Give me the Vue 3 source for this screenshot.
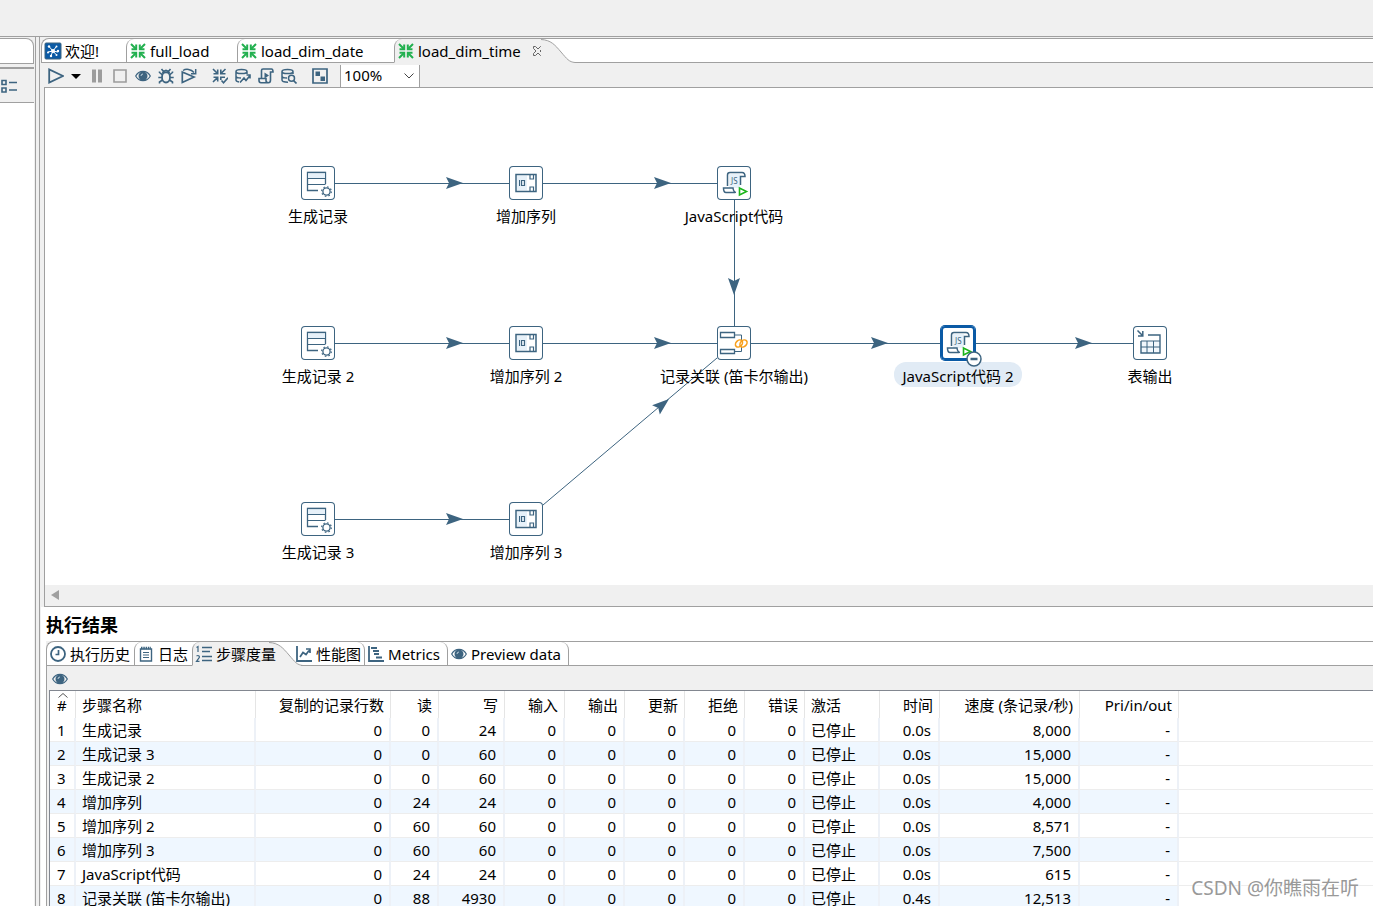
<script setup>
import { ref } from 'vue'

const zoom = ref('100%')

const icons = {
  logo: '<rect width="16" height="16" rx="1" fill="#0a5aa5"/><path d="M8 8 4 3.500M8 8l3-4M8 8 3 9M8 8l5 1M8 8l-2 4.500M8 8l3 3.500" stroke="#fff" stroke-width="1"/><g fill="#fff" stroke="none"><circle cx="8" cy="8" r="2"/><circle cx="4" cy="3.500" r="1.200"/><circle cx="11.500" cy="3.500" r="1"/><circle cx="3" cy="9.500" r="1"/><circle cx="13" cy="8" r="1.200"/><circle cx="6" cy="13" r="1.200"/><circle cx="11.500" cy="12" r="1"/></g>',
  trans: '<g stroke="#22b04f" stroke-width="2" fill="none"><path d="M1 1l5 5M15 1l-5 5M1 15l5-5M15 15l-5-5"/><path d="M1.500 6.200h4.700V1.500M14.500 6.200H9.800V1.500M1.500 9.800h4.700v4.700M14.500 9.800H9.800v4.700"/></g>',
  play: '<path d="M1.200 1.500v13L15 8z" stroke-width="1.800"/>',
  pause: '<path d="M3 1.500h4v13H3zM9 1.500h4v13H9z" fill="#9c9c9c" stroke="none"/>',
  stop: '<path d="M2 2h12v12H2z" stroke="#9c9c9c" stroke-width="1.600"/>',
  eye: '<path d="M.700 8C4 1.800 12 1.800 15.300 8 12 14.200 4 14.200.700 8z" stroke-width="1.200"/><circle cx="8" cy="8" r="4.500" fill="#3d6480" stroke="none"/><path d="M6 8a2 2 0 0 1 2-2" stroke="#bdd0dc" stroke-width="1"/>',
  bug: '<ellipse cx="8" cy="9.300" rx="4" ry="5.200" stroke-width="1.800"/><path d="M5 4.500Q8 0 11 4.500zM3.500 1l2 2.500M12.500 1l-2 2.500M4.500 7 1.500 4.500v-1M11.500 7l3-2.500v-1M4 9.500H.300M12 9.500h3.700M4.500 12l-3 2v1.500M11.500 12l3 2v1.500" stroke-width="1.600"/>',
  replay: '<path d="M1.300 4v10.500L13 9z" stroke-width="1.700"/><path d="M2 2.500C5 .500 10 1 13 4.500M14.700 1v4.800H10" stroke-width="1.500"/>',
  verify: '<g stroke-width="1.600"><path d="M1 1l4.500 4.500M13.500 1 9 5.500M1 14l4.500-4.500M1.500 5.700h4.200V1.500M13.500 5.700H8.800V1.500M1.500 9.300h4.200v4.200M13 9.300H8.800V12"/><path d="m9.500 12.500 2 2.200 4.500-5"/></g>',
  dbarrow: '<path d="M1 3.500C1 .700 12 .700 12 3.500S1 6.300 1 3.500zV12c0 1 1 1.700 3 2M12 3.500V6M1 8c0 1.500 2.500 2 5 2" stroke-width="1.500"/><path d="m5 14.500 4-4.500 2 2.500 4-5M11.500 7H15v3.500" stroke-width="1.600"/>',
  script: '<path d="M3.500 10.500v-8Q3.500 1 5 1h8.500Q15 1 15 4h-2.500V12q0 2.700-2.200 2.700H3Q1 14.700 1 12.500v-2h7v2q0 2 2 2" stroke-width="1.600"/><path d="m6.500 4.500 4.500 3-4.500 3z" fill="#3d6480" stroke="none"/>',
  dbsearch: '<path d="M1 3.500C1 .700 12 .700 12 3.500S1 6.300 1 3.500zV12c0 1.500 3 2.200 6 2.200M12 3.500V6M1 8c0 1.500 2.500 2 5 2" stroke-width="1.500"/><circle cx="10.500" cy="10.200" r="3" stroke-width="1.500"/><path d="m12.500 12.500 3 3" stroke-width="1.700"/>',
  panes: '<path d="M1 1h14v14H1z" stroke-width="1.700"/><path d="M3.500 3.500h4.500v4.500H3.500zM8.500 8.500H13V13H8.500z" fill="#3d6480" stroke="none"/>',
  clock: '<circle cx="8" cy="8" r="7" stroke-width="1.800"/><path d="M8.500 4v4.500H5.500" stroke-width="1.700"/>',
  log: '<path d="M2.500 3h11v12h-11z" stroke-width="1.400"/><path d="M3 2h10" stroke-width="2.400" stroke-dasharray="1.500 .800"/><path d="M5 6.500h6M5 9h6M5 11.500h6" stroke-width="1.200"/>',
  steps: '<path d="M6 1.500h10M6 5.500h8M6 10.500h10M6 14.500h10" stroke-width="1.300"/><path d="m.500 1.500 1.500-1V6M.500 10q1.500-1 2.500 0t0 2L.500 15.400H3.500" stroke-width="1.200"/>',
  chart: '<path d="M1 0v15h15" stroke-width="1.800"/><path d="m4 11 3-4.500 3 2 3-4M10 3h4v4" stroke-width="1.700"/>',
  gantt: '<path d="M1 0v15h15" stroke-width="1.800"/><path d="M3 2h6M5 5h6M6 8h5M8 11.500h6" stroke-width="2"/>',
  outline: '<path d="M1 1.500h4v4H1zM1 9h4v4H1z" stroke-width="1.600"/><path d="M8 3.500h8M8 11h8" stroke-width="1.500"/>',
}

const nodeIcons = {
  rows: '<path d="M24.500 18V6.500h-18v18H17" stroke-width="1.300"/><path d="M7 7h17v5H7z" fill="#e7f1f9" stroke="none"/><path d="M6.500 12.500h18M6.500 18.500h18" stroke-width="1"/><path d="M6.500 6.500h18" stroke-width="1.200"/><circle cx="25.500" cy="25.500" r="3.600" stroke-width="1.300"/><circle cx="25.500" cy="25.500" r="4.800" stroke-width="1.200" stroke-dasharray="1.600 2.170"/>',
  seq: '<path d="M8 9.500h10v15H8z" fill="#e7f1f9" stroke="none"/><path d="M7 8.500h20v17H7z" stroke-width="1.500"/><path d="M10.500 14v6" stroke-width="1"/><path d="M12.500 14.500h3v5h-3zM21 9v4h3.500V9M21 25v-4h3.500v4" stroke-width="1.200"/>',
  js: '<path d="M12 8h11v14H12z" fill="#e7f1f9" stroke="none"/><path d="M10.500 20V9Q10.500 6.500 13 6.500h12q3 0 3 4h-4.500V19M18 26.500H9Q6.500 26.500 6.500 22H16q.500 4 3 4.500" stroke-width="1.500"/><text x="14" y="18" font-family="Noto Sans" font-size="8" fill="#3d6480" stroke="none">JS</text><path d="M22.500 22v7l7-3.500z" stroke="#1cb51c" stroke-width="1.600" fill="#fff"/>',
  join: '<path d="M3.500 6.500h14v5h-14zM3.500 23.500h14v4h-14z" stroke-width="1.300"/><path d="M18 9h6.500v5M18 25.500h6.500V21" stroke-width="1"/><g stroke="#f8a01c" stroke-width="1.600"><ellipse cx="22" cy="17.500" rx="4" ry="3" transform="rotate(-45 22 17.500)"/><ellipse cx="26.500" cy="17.500" rx="4" ry="3" transform="rotate(-45 26.500 17.500)"/></g>',
  table: '<path d="M8 15h19v12H8z" fill="#f1f7fc" stroke="none"/><path d="M15 9h12v18H8V15" stroke-width="1.400"/><path d="M8 15h19M8 21h19M14 15v12M20.500 15v12" stroke-width="1"/><path d="m4.500 4.500 5 5M9.800 5v5H5" stroke-width="1.500"/>',
}

const nodes = [
  { x: 273, y: 95, icon: 'rows', label: '生成记录' },
  { x: 481, y: 95, icon: 'seq', label: '增加序列' },
  { x: 689, y: 95, icon: 'js', label: 'JavaScript代码' },
  { x: 273, y: 255, icon: 'rows', label: '生成记录 2' },
  { x: 481, y: 255, icon: 'seq', label: '增加序列 2' },
  { x: 689, y: 255, icon: 'join', label: '记录关联 (笛卡尔输出)' },
  { x: 913, y: 255, icon: 'js', label: 'JavaScript代码 2', selected: true },
  { x: 1105, y: 255, icon: 'table', label: '表输出' },
  { x: 273, y: 431, icon: 'rows', label: '生成记录 3' },
  { x: 481, y: 431, icon: 'seq', label: '增加序列 3' },
]

const arrows = [
  [418, 95, 0], [626, 95, 0], [418, 255, 0], [626, 255, 0], [843, 255, 0],
  [1047, 255, 0], [418, 431, 0], [689, 207, 90], [624, 311, -40],
]

const tools = [
  [['pause', '暂停'], ['stop', '停止'], ['eye', '预览'], ['bug', '调试'], ['replay', '重放']],
  [['verify', '校验'], ['dbarrow', '影响分析'], ['script', '获取 SQL'], ['dbsearch', '浏览数据库']],
  [['panes', '显示结果面板']],
]

const fileTabs = [
  { icon: 'logo', text: '欢迎!', cls: 'w-welcome' },
  { icon: 'trans', text: 'full_load', cls: 'w-full' },
  { icon: 'trans', text: 'load_dim_date', cls: 'w-date' },
]

const columns = [
  ['#', 'c-num', false], ['步骤名称', 'c-name', false], ['复制的记录行数', 'c-copy', true],
  ['读', 'c-read', true], ['写', 'c-write', true], ['输入', 'c-io', true], ['输出', 'c-io', true],
  ['更新', 'c-io', true], ['拒绝', 'c-io', true], ['错误', 'c-io', true], ['激活', 'c-state', false],
  ['时间', 'c-io', true], ['速度 (条记录/秒)', 'c-speed', true], ['Pri/in/out', 'c-pri', true],
]

const rows = [
  ['生成记录', 0, 24, '0.0s', '8,000'],
  ['生成记录 3', 0, 60, '0.0s', '15,000'],
  ['生成记录 2', 0, 60, '0.0s', '15,000'],
  ['增加序列', 24, 24, '0.0s', '4,000'],
  ['增加序列 2', 60, 60, '0.0s', '8,571'],
  ['增加序列 3', 60, 60, '0.0s', '7,500'],
  ['JavaScript代码', 24, 24, '0.0s', '615'],
  ['记录关联 (笛卡尔输出)', 88, 4930, '0.4s', '12,513'],
].map((r, i) => [i + 1, r[0], 0, r[1], r[2], 0, 0, 0, 0, 0, '已停止', r[3], r[4], '-'])
</script>

<template>
  <div class="app">
    <header class="topbar"></header>
    <div class="workspace">
      <aside class="side">
        <div class="side-tab"></div>
        <div class="side-tools">
          <button class="tool" aria-label="大纲"><svg class="icon" viewBox="0 0 16 16" v-html="icons.outline"></svg></button>
        </div>
        <div class="side-body"></div>
      </aside>

      <main class="editor">
        <nav class="tabs file-tabs">
          <button v-for="t in fileTabs" :key="t.text" class="tab" :class="t.cls">
            <svg class="icon" viewBox="0 0 16 16" v-html="icons[t.icon]"></svg><span>{{ t.text }}</span>
          </button>
          <button class="tab active">
            <svg class="icon" viewBox="0 0 16 16" v-html="icons.trans"></svg><span>load_dim_time</span>
            <svg class="close" viewBox="0 0 12 12"><path d="M1.500 1.500h2L6 4l2.500-2.500h2v2L8 6l2.500 2.500v2h-2L6 8l-2.500 2.500h-2v-2L4 6 1.500 3.500z" /></svg>
          </button>
          <svg class="tail" viewBox="0 0 34 24"><path class="fill" d="M0 0C10 1 14 6 20 13S28 23 34 24H0z" /><path class="line" d="M0 .500C10 1 14 6 20 13S28 23 34 23.500" /></svg>
          <div class="rest"></div>
        </nav>

        <div class="toolbar">
          <button class="tool" aria-label="运行"><svg class="icon" viewBox="0 0 16 16" v-html="icons.play"></svg></button>
          <button class="tool caret" aria-label="运行选项"><svg viewBox="0 0 10 16"><path d="M0 6h10L5 11z" /></svg></button>
          <div v-for="(g, i) in tools" :key="i" class="group">
            <button v-for="t in g" :key="t[0]" class="tool" :aria-label="t[1]"><svg class="icon" viewBox="0 0 16 16" v-html="icons[t[0]]"></svg></button>
          </div>
          <div class="combo">
            <select v-model="zoom" aria-label="缩放"><option>100%</option><option>75%</option><option>50%</option></select>
            <svg viewBox="0 0 10 6"><path d="m.500.500 4.500 4.500L9.500.500" /></svg>
          </div>
        </div>

        <section class="canvas">
          <svg class="edges">
            <path class="edge" d="M290 95.500H464M498 95.500H672M689.500 112V238M290 255.500H464M498 255.500H672M706 255.500H895M931 255.500H1088M290 431.500H464" />
            <path class="edge" d="M498 417 672 270" />
            <path v-for="(a, i) in arrows" :key="i" class="arrow" d="M-17-6 0 0-17 6-14 0z" :transform="`translate(${a[0]} ${a[1]}) rotate(${a[2]})`" />
          </svg>
          <div v-for="n in nodes" :key="n.label" class="node" :class="{ selected: n.selected }" :style="{ left: n.x + 'px', top: n.y + 'px' }">
            <div class="box">
              <svg viewBox="0 0 34 34" v-html="nodeIcons[n.icon]"></svg>
              <svg v-if="n.selected" class="badge" viewBox="0 0 16 16"><circle cx="8" cy="8" r="7" /><path d="M4.500 8h7" /></svg>
            </div>
            <span class="label">{{ n.label }}</span>
          </div>
        </section>
        <div class="scroll"><button aria-label="向左滚动"><svg viewBox="0 0 8 10"><path d="M8 0v10L0 5z" /></svg></button></div>

        <section class="results">
          <h2>执行结果</h2>
          <div class="result-panel">
            <nav class="tabs result-tabs">
              <button class="tab w-history"><svg class="icon" viewBox="0 0 16 16" v-html="icons.clock"></svg><span>执行历史</span></button>
              <button class="tab w-log"><svg class="icon" viewBox="0 0 16 16" v-html="icons.log"></svg><span>日志</span></button>
              <button class="tab active"><svg class="icon" viewBox="0 0 16 16" v-html="icons.steps"></svg><span>步骤度量</span></button>
              <svg class="tail" viewBox="0 0 34 24"><path class="fill" d="M0 0C10 1 14 6 20 13S28 23 34 24H0z" /><path class="line" d="M0 .500C10 1 14 6 20 13S28 23 34 23.500" /></svg>
              <button class="tab right first"><svg class="icon" viewBox="0 0 16 16" v-html="icons.chart"></svg><span>性能图</span></button>
              <button class="tab right w-metrics"><svg class="icon" viewBox="0 0 16 16" v-html="icons.gantt"></svg><span>Metrics</span></button>
              <button class="tab right w-preview"><svg class="icon" viewBox="0 0 16 16" v-html="icons.eye"></svg><span>Preview data</span></button>
              <div class="rest"></div>
            </nav>
            <div class="mini-tools">
              <button class="tool" aria-label="显示"><svg class="icon" viewBox="0 0 16 16" v-html="icons.eye"></svg></button>
            </div>
            <div class="table-wrap">
              <table>
                <colgroup><col v-for="(c, i) in columns" :key="i" :class="c[1]"><col></colgroup>
                <thead>
                  <tr>
                    <th v-for="(c, i) in columns" :key="i" :class="{ num: c[2] }">
                      <svg v-if="i === 0" class="sort" viewBox="0 0 10 5"><path d="m.500 4.500 4.500-4 4.500 4" /></svg>{{ c[0] }}
                    </th>
                    <th></th>
                  </tr>
                </thead>
                <tbody>
                  <tr v-for="r in rows" :key="r[0]">
                    <td v-for="(v, i) in r" :key="i" :class="{ num: columns[i][2] }">{{ v }}</td>
                    <td></td>
                  </tr>
                </tbody>
              </table>
            </div>
          </div>
        </section>
      </main>
    </div>
    <div class="watermark">CSDN @你瞧雨在听</div>
  </div>
</template>

<style>
body { margin: 0; overflow: hidden; }
</style>

<style scoped>
.app {
  position: relative;
  display: flex;
  flex-direction: column;
  height: 100vh;
  overflow: hidden;
  background: #f0f0f0;
  color: #000;
  font: 15px/20px "Noto Sans", "Noto Sans CJK SC", sans-serif;
}
.app * { box-sizing: border-box; }
button { padding: 0; border: 0; background: none; font: inherit; color: inherit; }
svg { display: block; fill: none; flex: none; }
.icon { width: 16px; height: 16px; stroke: #3d6480; }
.tab .icon { overflow: visible; }

.topbar { flex: none; height: 36px; }
.workspace { flex: 1; display: flex; min-height: 0; border-top: 1px solid #a0a0a0; }
.side {
  flex: none;
  display: flex;
  flex-direction: column;
  width: 36px;
  margin-right: 3px;
  border-right: 1px solid #a0a0a0;
}
.side-tab {
  height: 26px;
  margin: 1px 1px 0 0;
  background: #fff;
  border: solid #a0a0a0;
  border-width: 1px 1px 1px 0;
  border-radius: 0 8px 0 0;
}
.side-tools {
  height: 36px;
  margin: 3px 1px 0 0;
  padding-top: 10px;
  border: solid #a0a0a0;
  border-width: 2px 0 1px;
}
.side-tools .icon { width: 18px; }
.side-body { flex: 1; background: #fff; margin-right: 1px; }

.editor {
  flex: 1;
  min-width: 0;
  display: flex;
  flex-direction: column;
  padding-left: 1px;
  border-left: 1px solid #a0a0a0;
}
.tabs { display: flex; height: 25px; flex: none; border-top: 1px solid #a0a0a0; border-left: 1px solid #a0a0a0; border-top-left-radius: 8px; background: #fff; overflow: hidden; }
.file-tabs { margin-top: 1px; }
.tab {
  flex: none;
  display: flex;
  align-items: center;
  gap: 4px;
  padding: 0 3px;
  white-space: nowrap;
  border-bottom: 1px solid #a0a0a0;
}
.tab span { position: relative; z-index: 1; }
.tab + .tab { border-left: 1px solid #a0a0a0; border-top-left-radius: 8px; }
.tab.active { background: #f0f0f0; border-bottom-color: #f0f0f0; padding-right: 0; }
.w-welcome { width: 84px; }
.w-full { width: 111px; }
.w-date { width: 157px; }
.close { width: 12px; height: 12px; margin-left: 7px; stroke: #666; stroke-width: 1; }
.tail { width: 34px; height: 24px; }
.file-tabs .tail { margin-left: -3px; }
.tail .fill { fill: #f0f0f0; }
.tail .line { stroke: #a0a0a0; stroke-width: 1; }
.rest { flex: 1; border-bottom: 1px solid #a0a0a0; }

.toolbar { flex: none; display: flex; align-items: center; height: 24px; padding: 2px 0 0 7px; }
.caret { margin: 0 8px 0 7px; }
.caret svg { width: 10px; height: 16px; fill: #000; }
.group { display: flex; gap: 7px; margin-right: 15px; }
.group:nth-last-child(2) { margin-right: 12px; }
.combo { position: relative; align-self: flex-end; width: 80px; height: 22px; background: #fff; border: solid #a0a0a0; border-width: 0 1px; }
.combo select { display: block; width: 100%; height: 20px; padding: 0 3px; border: 0; background: none; appearance: none; font: inherit; color: inherit; }
.combo svg { position: absolute; right: 5px; top: 8px; width: 10px; height: 6px; stroke: #444; pointer-events: none; }

.canvas {
  position: relative;
  flex: none;
  height: 498px;
  margin-left: 3px;
  background: #fff;
  border: solid #a0a0a0;
  border-width: 1px 0 0 1px;
  overflow: hidden;
}
.edges { position: absolute; inset: 0; width: 100%; height: 100%; }
.edge { stroke: #3d6480; stroke-width: 1; }
.arrow { fill: #3d6480; }
.node { position: absolute; display: flex; flex-direction: column; align-items: center; width: 200px; margin: -17px 0 0 -100px; }
.box { position: relative; width: 34px; height: 34px; border-radius: 4px; background: #fff; box-shadow: inset 0 0 0 1px #3d6480; }
.box svg { width: 34px; height: 34px; stroke: #3d6480; }
.selected .box { box-shadow: 0 0 0 1px #0a5aa5, inset 0 0 0 2px #0a5aa5; z-index: 1; }
.box .badge { position: absolute; left: 25px; top: 25px; width: 16px; height: 16px; }
.badge circle { fill: #fff; stroke-width: 1.5; }
.badge path { stroke-width: 2.5; }
.label { margin-top: 2px; padding: 4px 8px 1px; border-radius: 12px; white-space: nowrap; }
.selected .label { background: #e1ebf5; }
.scroll { flex: none; display: flex; align-items: center; height: 22px; margin-left: 3px; padding: 0 0 2px 6px; border: solid #a0a0a0; border-width: 0 0 1px 1px; }
.scroll svg { width: 8px; height: 10px; fill: #a0a0a0; }

.results { flex: 1; min-height: 0; display: flex; flex-direction: column; background: #fff; }
h2 { flex: none; margin: 0; padding: 6px 5px 4px; font-size: 18px; line-height: 24px; font-weight: 700; }
.result-panel { flex: 1; min-height: 0; display: flex; flex-direction: column; margin-left: 5px; background: #f0f0f0; }
.w-history { width: 87px; }
.w-log { width: 58px; }
.result-tabs .tail { margin-left: -7px; }
.tab.right { border-right: 1px solid #a0a0a0; border-top-right-radius: 8px; border-left: 0; border-top-left-radius: 0; }
.tab.first { margin-left: -10px; border-bottom-color: transparent; background: linear-gradient(#a0a0a0, #a0a0a0) 8px 100% / 100% 1px no-repeat border-box; }
.w-metrics { width: 83px; }
.w-preview { width: 121px; }
.mini-tools { flex: none; display: flex; align-items: center; height: 24px; padding: 2px 0 0 5px; border-left: 1px solid #a0a0a0; }
.table-wrap { flex: 1; min-height: 0; overflow: hidden; padding-left: 2px; border-left: 1px solid #a0a0a0; }
table { width: 100%; table-layout: fixed; border-collapse: separate; border-spacing: 0; background: #fff; border: solid #828790; border-width: 1px 0 0 1px; }
th, td { padding: 0 6px; text-align: left; white-space: nowrap; font-weight: 400; }
th { position: relative; height: 27px; border-right: 1px solid #e5e5e5; }
td { height: 24px; padding-right: 7px; border-right: 2px solid #edf1f7; border-bottom: 1px solid #ededed; }
th:first-child, td:first-child { padding-left: 7px; }
th:last-child, td:last-child { border-right: 0; }
.num { text-align: right; }
tbody tr:nth-child(even) td:not(:last-child) { background: #eff7ff; }
.sort { position: absolute; left: 8px; top: 2px; width: 10px; height: 5px; stroke: #555; }
.c-num { width: 26px; }
.c-name { width: 180px; }
.c-copy { width: 135px; }
.c-read { width: 48px; }
.c-write { width: 66px; }
.c-io { width: 60px; }
.c-state { width: 75px; }
.c-speed { width: 140px; }
.c-pri { width: 99px; }

.watermark {
  position: absolute;
  right: 14px;
  bottom: 4px;
  font-size: 19px;
  line-height: 28px;
  color: #999;
  text-shadow: 1px 1px 0 #fff;
}
</style>
